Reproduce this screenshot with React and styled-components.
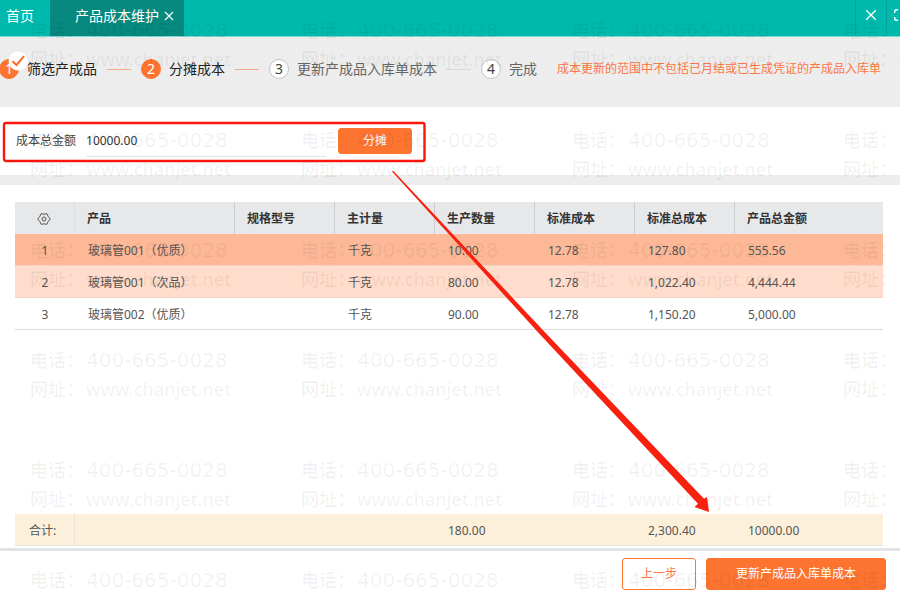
import React, { useState } from "react";
import styled, { createGlobalStyle, css } from "styled-components";

const GlobalStyle = createGlobalStyle`
  * {
    box-sizing: border-box;
  }
  body {
    margin: 0;
    background: #fff;
    color: #555;
    font-family: "Noto Sans", "Noto Sans CJK SC", sans-serif;
    font-size: 12px;
    line-height: 20px;
  }
  button, input {
    font-family: inherit;
    font-size: 12px;
    line-height: 20px;
  }
`;

const Page = styled.div`
  position: relative;
  display: flex;
  flex-direction: column;
  min-height: 100vh;
  overflow: hidden;
`;

const TopBar = styled.header`
  display: flex;
  justify-content: space-between;
  height: 37px;
  background: #00b9ad;
  border-bottom: 1px solid #7fd6d0;
  overflow: hidden;
`;

const TabList = styled.nav`
  display: flex;
`;

const Tab = styled.div`
  display: flex;
  align-items: center;
  gap: 5px;
  padding: 0 16px 4px 6px;
  color: #fff;
  a {
    color: inherit;
    font-size: 14px;
    text-decoration: none;
  }
  ${(props) =>
    props.$active &&
    css`
      padding: 0 10px 4px 25px;
      background: #07897f;
    `}
`;

const IconButton = styled.button`
  display: flex;
  align-items: center;
  padding: 0;
  border: 0;
  background: none;
  color: inherit;
  cursor: pointer;
`;

const WindowTools = styled.div`
  display: flex;
  flex: none;
  margin-right: -8px;
  color: #fff;
`;

const ToolButton = styled(IconButton)`
  padding: 0 9px 6px;
  border-left: 1px solid #05a198;
  &:last-child {
    padding: 0 0 6px 7px;
  }
`;

const StepBar = styled.div`
  display: flex;
  align-items: center;
  gap: 20px;
  height: 70px;
  padding-bottom: 6px;
  background: #ededed;
`;

const StepList = styled.ol`
  display: flex;
  gap: 10px;
  margin: 0 0 0 -1px;
  padding: 0;
  list-style: none;
`;

const StepItem = styled.li`
  display: flex;
  align-items: center;
  gap: 8px;
  color: ${(props) => (props.$active ? "#222" : "#666")};
  font-size: 14px;
  white-space: nowrap;
`;

const StepNumber = styled.span`
  position: relative;
  display: flex;
  align-items: center;
  justify-content: center;
  width: 20px;
  height: 20px;
  border: 1px solid ${(props) => (props.$active ? "#fd7430" : "#c4c4c4")};
  border-radius: 50%;
  background: ${(props) => (props.$active ? "#fd7430" : "#fff")};
  color: ${(props) => (props.$active ? "#fff" : "#444")};
`;

const StepLine = styled.span`
  width: 24px;
  height: 1px;
  margin-left: 2px;
  background: ${(props) => (props.$active ? "#f5a98a" : "#dadada")};
`;

const DoneBadge = styled.svg`
  position: absolute;
  top: -9px;
  left: 8px;
`;

const Hint = styled.span`
  color: #fd7745;
  white-space: nowrap;
`;

const CostForm = styled.form`
  display: flex;
  align-items: center;
  height: 78px;
  padding: 0 16px;
  border-bottom: 10px solid #ededed;
`;

const FieldLabel = styled.label`
  margin-right: 10px;
  color: #444;
`;

const AmountInput = styled.input`
  width: 240px;
  height: 32px;
  margin-right: 12px;
  padding: 0;
  border: 0;
  border-bottom: 1px solid #e2e2e2;
  outline: none;
  background: transparent;
  color: #333;
`;

const Button = styled.button`
  height: ${(props) => (props.$small ? "26px" : "32px")};
  padding: 0 ${(props) => (props.$small ? "24px" : "18px")};
  border: 1px solid #fd7430;
  border-radius: 3px;
  background: #fd7430;
  color: #fff;
  cursor: pointer;
  ${(props) =>
    props.$outline &&
    css`
      background: #fff;
      color: #fd7745;
    `}
  ${(props) =>
    props.$wide &&
    css`
      padding: 0 29px;
    `}
`;

const Content = styled.main`
  display: flex;
  flex: 1;
  flex-direction: column;
  justify-content: space-between;
  padding: 17px 17px 2px 15px;
`;

const Table = styled.table`
  width: 100%;
  table-layout: fixed;
  border-collapse: separate;
  border-spacing: 0;
`;

const HeadCell = styled.th`
  height: 32px;
  padding: 1px 12px 0;
  border-right: 1px solid #ccced0;
  background: #e7e8ea;
  color: #333;
  font-weight: bold;
  text-align: left;
  &:first-child {
    padding: 1px 22px 0;
    border-color: #dddfe1;
  }
  &:last-child {
    border-right: 0;
  }
`;

const Cell = styled.td`
  height: 32px;
  padding: 2px 12px 0 13px;
  border-bottom: 1px solid #dcdcdc;
  white-space: nowrap;
  &:first-child {
    padding: 2px 0 0;
    text-align: center;
  }
`;

const rowColors = { selected: "#fdb997", hover: "#ffdccb", plain: "#fff" };

const Row = styled.tr`
  ${Cell} {
    background: ${(props) => rowColors[props.$tone]};
    ${(props) =>
      props.$tone !== "plain" &&
      css`
        border-bottom-color: #f5d3c3;
      `}
  }
`;

const TotalRow = styled.tr`
  ${Cell} {
    border-color: #e6e3dc;
    background: #fdf0da;
  }
  ${Cell}:first-child {
    padding-right: 4px;
    border-right: 1px solid #e6e3dc;
  }
`;

const Footer = styled.footer`
  display: flex;
  justify-content: flex-end;
  gap: 10px;
  padding: 7px 14px 3px;
  border-top: 3px solid #e1e3e5;
`;

const Annotation = styled.svg`
  position: absolute;
  top: 0;
  left: 0;
  pointer-events: none;
`;

const Watermark = styled.div`
  position: absolute;
  top: 16px;
  left: 30px;
  display: grid;
  grid-template-columns: repeat(4, 271px);
  grid-auto-rows: 110px;
  color: rgba(0, 0, 0, 0.06);
  font-size: 18px;
  font-weight: 500;
  line-height: 29px;
  white-space: nowrap;
  pointer-events: none;
  user-select: none;
`;

const MarkLine = styled.div`
  display: flex;
  height: 29px;
  gap: 2px;
`;

const MarkPhone = styled.span`
  font-family: "DejaVu Sans", sans-serif;
  font-size: 20px;
`;

const MarkSite = styled.span`
  font-size: 18px;
`;

const CloseIcon = ({ size }) => (
  <svg width={size} height={size} viewBox="0 0 12 12" aria-hidden="true">
    <path d="M1.2 1.2l9.6 9.6M10.8 1.2l-9.6 9.6" stroke="currentColor" strokeWidth="1.3" />
  </svg>
);

const FullscreenIcon = () => (
  <svg width="14" height="12" viewBox="0 0 14 12" aria-hidden="true">
    <path
      d="M4 .7H2.5Q.7.7.7 2.5V4M.7 8v1.5q0 1.8 1.8 1.8H4M10 .7h1.5q1.8 0 1.8 1.8V4M13.3 8v1.5q0 1.8-1.8 1.8H10"
      fill="none"
      stroke="currentColor"
      strokeWidth="1.4"
    />
  </svg>
);

const SettingIcon = () => (
  <svg width="14" height="14" viewBox="0 0 14 14" fill="none" stroke="#555" aria-hidden="true">
    <path d="M4.1 1.7Q7 2.6 9.9 1.7Q10.8 4.6 13.3 7Q10.8 9.4 9.9 12.3Q7 11.4 4.1 12.3Q3.2 9.4 .7 7Q3.2 4.6 4.1 1.7z" strokeLinejoin="round" />
    <circle cx="7" cy="7" r="2" />
  </svg>
);

const steps = [
  { label: "筛选产成品", active: true, done: true },
  { label: "分摊成本", active: true },
  { label: "更新产成品入库单成本" },
  { label: "完成" },
];

const headers = ["产品", "规格型号", "主计量", "生产数量", "标准成本", "标准总成本", "产品总金额"];

const rows = [
  { tone: "selected", cells: ["玻璃管001（优质）", "", "千克", "10.00", "12.78", "127.80", "555.56"] },
  { tone: "hover", cells: ["玻璃管001（次品）", "", "千克", "80.00", "12.78", "1,022.40", "4,444.44"] },
  { tone: "plain", cells: ["玻璃管002（优质）", "", "千克", "90.00", "12.78", "1,150.20", "5,000.00"] },
];

const totals = ["", "", "", "180.00", "", "2,300.40", "10000.00"];

const columnWidths = [60, 160, 100, 100, 100, 100, 100];

function Columns() {
  return (
    <colgroup>
      {columnWidths.map((width, i) => (
        <col key={i} width={width} />
      ))}
      <col />
    </colgroup>
  );
}

function Steps() {
  return (
    <StepList>
      {steps.map((step, i) => (
        <StepItem key={step.label} $active={step.active}>
          <StepNumber $active={step.active}>
            {i + 1}
            {step.done && (
              <DoneBadge width="20" height="20" viewBox="0 0 20 20" aria-hidden="true">
                <circle cx="10" cy="10" r="9.5" fill="#fff" />
                <path d="M4.5 10.2l4 3.8 7.5-8.8" fill="none" stroke="#fd6a20" strokeWidth="2" />
              </DoneBadge>
            )}
          </StepNumber>
          {step.label}
          {i < steps.length - 1 && <StepLine $active={step.active} />}
        </StepItem>
      ))}
    </StepList>
  );
}

function App() {
  const [amount, setAmount] = useState("10000.00");

  return (
    <Page>
      <GlobalStyle />
      <TopBar>
        <TabList>
          <Tab>
            <a href="#home">首页</a>
          </Tab>
          <Tab $active>
            <a href="#cost">产品成本维护</a>
            <IconButton type="button" aria-label="关闭标签">
              <CloseIcon size={10} />
            </IconButton>
          </Tab>
        </TabList>
        <WindowTools>
          <ToolButton type="button" aria-label="关闭">
            <CloseIcon size={12} />
          </ToolButton>
          <ToolButton type="button" aria-label="全屏">
            <FullscreenIcon />
          </ToolButton>
        </WindowTools>
      </TopBar>
      <StepBar>
        <Steps />
        <Hint>成本更新的范围中不包括已月结或已生成凭证的产成品入库单</Hint>
      </StepBar>
      <CostForm onSubmit={(e) => e.preventDefault()}>
        <FieldLabel htmlFor="amount">成本总金额</FieldLabel>
        <AmountInput id="amount" value={amount} onChange={(e) => setAmount(e.target.value)} />
        <Button $small>分摊</Button>
      </CostForm>
      <Content>
        <Table>
          <Columns />
          <thead>
            <tr>
              <HeadCell>
                <IconButton type="button" aria-label="设置">
                  <SettingIcon />
                </IconButton>
              </HeadCell>
              {headers.map((header) => (
                <HeadCell key={header}>{header}</HeadCell>
              ))}
            </tr>
          </thead>
          <tbody>
            {rows.map((row, i) => (
              <Row key={i} $tone={row.tone}>
                <Cell>{i + 1}</Cell>
                {row.cells.map((cell, j) => (
                  <Cell key={j}>{cell}</Cell>
                ))}
              </Row>
            ))}
          </tbody>
        </Table>
        <Table>
          <Columns />
          <tbody>
            <TotalRow>
              <Cell>合计:</Cell>
              {totals.map((total, i) => (
                <Cell key={i}>{total}</Cell>
              ))}
            </TotalRow>
          </tbody>
        </Table>
      </Content>
      <Footer>
        <Button type="button" $outline>
          上一步
        </Button>
        <Button type="button" $wide>
          更新产成品入库单成本
        </Button>
      </Footer>
      <Watermark aria-hidden="true">
        {Array.from({ length: 24 }, (_, i) => (
          <div key={i}>
            <MarkLine>
              电话：<MarkPhone>400-665-0028</MarkPhone>
            </MarkLine>
            <MarkLine>
              网址：<MarkSite>www.chanjet.net</MarkSite>
            </MarkLine>
          </div>
        ))}
      </Watermark>
      <Annotation width="720" height="520" viewBox="0 0 720 520" aria-hidden="true">
        <rect x="4" y="123" width="420.5" height="38" rx="2" fill="none" stroke="#f8170f" strokeWidth="2.4" />
        <path
          d="M392 171.5L393.2 170.8L547.5 335L704 498.8L707 497L709 512L694.5 507L698 503.8L540.5 335z"
          fill="#f8200f"
        />
      </Annotation>
    </Page>
  );
}

export default App;
